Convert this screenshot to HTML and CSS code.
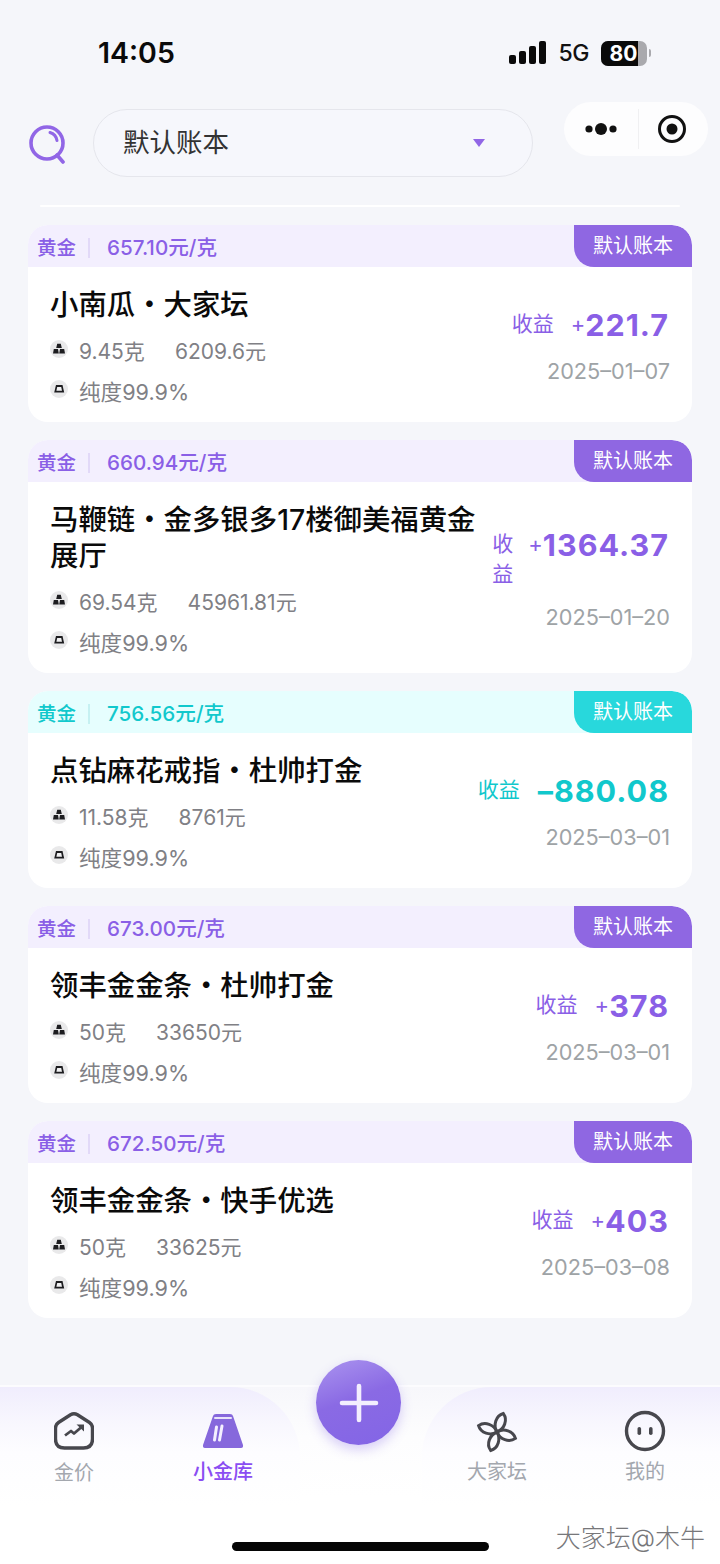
FILE: index.html
```html
<!DOCTYPE html>
<html lang="zh-CN">
<head>
<meta charset="utf-8">
<title>小金库</title>
<link rel="stylesheet" href="styles.css">
</head>
<body>
<div class="page">
  <div class="status">
    <span class="time">14:05</span>
    <div class="status-right">
      <svg class="signal" width="37" height="24" viewBox="0 0 37 24"><rect x="0" y="14" width="7" height="9" rx="2"/><rect x="10" y="10" width="7" height="13" rx="2"/><rect x="20" y="5" width="7" height="18" rx="2"/><rect x="30" y="0" width="7" height="23" rx="2"/></svg>
      <span class="net">5G</span>
      <div class="battery"><div class="batt-body"><span class="batt-fill">80</span></div><i class="batt-cap"></i></div>
    </div>
  </div>

  <div class="nav">
    <svg class="search" width="40" height="40" viewBox="0 0 40 40" fill="none" stroke="#9166e6"><circle cx="19" cy="19" r="16" stroke-width="3.6"/><path d="M22 8.5a10 10 0 0 1 7 8" stroke-width="3" stroke-linecap="round"/><path d="M29 31l6 7" stroke-width="3.6" stroke-linecap="round"/></svg>
    <div class="picker"><span class="picker-text">默认账本</span><i class="caret"></i></div>
    <div class="capsule">
      <svg width="36" height="16" viewBox="0 0 36 16"><circle cx="6" cy="8" r="3.6"/><circle cx="18" cy="8" r="6"/><circle cx="30" cy="8" r="3.6"/></svg>
      <i class="cap-line"></i>
      <svg width="30" height="30" viewBox="0 0 30 30"><circle cx="15" cy="15" r="12.5" fill="none" stroke="#111" stroke-width="3"/><circle cx="15" cy="15" r="5.5"/></svg>
    </div>
  </div>
  <div class="rule"></div>

  <div class="list">
    <section class="card">
      <div class="card-head"><span class="kind">黄金</span><i class="sep"></i><span class="price">657.10元/克</span><span class="tag">默认账本</span></div>
      <div class="card-body">
        <div class="info">
          <h2 class="title">小南瓜・大家坛</h2>
          <div class="meta"><svg class="mi" viewBox="0 0 18 18"><use href="#bars"/></svg><span class="m1">9.45克</span><span class="m2">6209.6元</span></div>
          <div class="meta"><svg class="mi" viewBox="0 0 18 18"><use href="#bar"/></svg><span class="purity">纯度99.9%</span></div>
        </div>
        <div class="side s1">
          <div class="gain"><span class="gain-label">收益</span><span class="plus">+</span><span class="amount">221.7</span></div>
          <div class="date">2025–01–07</div>
        </div>
      </div>
    </section>

    <section class="card">
      <div class="card-head"><span class="kind">黄金</span><i class="sep"></i><span class="price">660.94元/克</span><span class="tag">默认账本</span></div>
      <div class="card-body">
        <div class="info">
          <h2 class="title">马鞭链・金多银多17楼御美福黄金展厅</h2>
          <div class="meta"><svg class="mi" viewBox="0 0 18 18"><use href="#bars"/></svg><span class="m1">69.54克</span><span class="m2">45961.81元</span></div>
          <div class="meta"><svg class="mi" viewBox="0 0 18 18"><use href="#bar"/></svg><span class="purity">纯度99.9%</span></div>
        </div>
        <div class="side s2">
          <div class="gain"><span class="gain-label wrap">收益</span><span class="plus">+</span><span class="amount">1364.37</span></div>
          <div class="date">2025–01–20</div>
        </div>
      </div>
    </section>

    <section class="card teal">
      <div class="card-head"><span class="kind">黄金</span><i class="sep"></i><span class="price">756.56元/克</span><span class="tag">默认账本</span></div>
      <div class="card-body">
        <div class="info">
          <h2 class="title">点钻麻花戒指・杜帅打金</h2>
          <div class="meta"><svg class="mi" viewBox="0 0 18 18"><use href="#bars"/></svg><span class="m1">11.58克</span><span class="m2">8761元</span></div>
          <div class="meta"><svg class="mi" viewBox="0 0 18 18"><use href="#bar"/></svg><span class="purity">纯度99.9%</span></div>
        </div>
        <div class="side s1">
          <div class="gain"><span class="gain-label">收益</span><span class="amount">–880.08</span></div>
          <div class="date">2025–03–01</div>
        </div>
      </div>
    </section>

    <section class="card">
      <div class="card-head"><span class="kind">黄金</span><i class="sep"></i><span class="price">673.00元/克</span><span class="tag">默认账本</span></div>
      <div class="card-body">
        <div class="info">
          <h2 class="title">领丰金金条・杜帅打金</h2>
          <div class="meta"><svg class="mi" viewBox="0 0 18 18"><use href="#bars"/></svg><span class="m1">50克</span><span class="m2">33650元</span></div>
          <div class="meta"><svg class="mi" viewBox="0 0 18 18"><use href="#bar"/></svg><span class="purity">纯度99.9%</span></div>
        </div>
        <div class="side s1">
          <div class="gain"><span class="gain-label">收益</span><span class="plus">+</span><span class="amount">378</span></div>
          <div class="date">2025–03–01</div>
        </div>
      </div>
    </section>

    <section class="card">
      <div class="card-head"><span class="kind">黄金</span><i class="sep"></i><span class="price">672.50元/克</span><span class="tag">默认账本</span></div>
      <div class="card-body">
        <div class="info">
          <h2 class="title">领丰金金条・快手优选</h2>
          <div class="meta"><svg class="mi" viewBox="0 0 18 18"><use href="#bars"/></svg><span class="m1">50克</span><span class="m2">33625元</span></div>
          <div class="meta"><svg class="mi" viewBox="0 0 18 18"><use href="#bar"/></svg><span class="purity">纯度99.9%</span></div>
        </div>
        <div class="side s1">
          <div class="gain"><span class="gain-label">收益</span><span class="plus">+</span><span class="amount">403</span></div>
          <div class="date">2025–03–08</div>
        </div>
      </div>
    </section>
  </div>

  <div class="tabbar">
    <div class="tab-bg left"></div>
    <div class="tab-bg right"></div>
    <div class="tab t1">
      <svg width="40" height="38" viewBox="0 0 40 38" fill="none" stroke="#47474d"><path d="M4.500 10.500L16.500 2.800q3.500-2 7 0l12 7.700q3 2 3 5.500V27q0 9-9 9H10.500q-9 0-9-9V16q0-3.500 3-5.500z" stroke-width="3.400"/><path d="M11 23.500l6-4.500 3 2.500 7-6" stroke-width="2.800" stroke-linejoin="round"/><path d="M22.500 12.500h7.500v7z" fill="#47474d" stroke="none"/></svg>
      <span class="tab-label">金价</span>
    </div>
    <div class="tab t2">
      <svg width="42" height="34" viewBox="0 0 42 34"><path d="M11 2q.5-2 3-2h14q2.500 0 3 2l10 29q.5 3-2 3H3q-2.500 0-2-3z" fill="#8668dc"/><path d="M13 4h16" stroke="#e9e3fb" stroke-width="2" stroke-linecap="round"/><path d="M14.500 13l-2 13M20 12l-2.500 14" stroke="#f4f0ff" stroke-width="3" stroke-linecap="round"/></svg>
      <span class="tab-label active">小金库</span>
    </div>
    <button class="fab" aria-label="添加"><svg width="40" height="40" viewBox="0 0 40 40"><path d="M20 3v34M3 20h34" stroke="#f3eefe" stroke-width="4.600" stroke-linecap="round"/></svg></button>
    <div class="tab t3">
      <svg width="42" height="42" viewBox="0 0 42 42" fill="none" stroke="#47474d" stroke-width="3"><g transform="rotate(19 21 21)"><path d="M21 21C15 16 14.500 6 21 1.500 27.500 6 27 16 21 21z"/><path d="M21 21C15 16 14.500 6 21 1.500 27.500 6 27 16 21 21z" transform="rotate(90 21 21)"/><path d="M21 21C15 16 14.500 6 21 1.500 27.500 6 27 16 21 21z" transform="rotate(180 21 21)"/><path d="M21 21C15 16 14.500 6 21 1.500 27.500 6 27 16 21 21z" transform="rotate(270 21 21)"/></g></svg>
      <span class="tab-label">大家坛</span>
    </div>
    <div class="tab t4">
      <svg width="42" height="42" viewBox="0 0 42 42"><circle cx="21" cy="21" r="18.500" fill="none" stroke="#47474d" stroke-width="3.400"/><rect x="13.500" y="17" width="3.600" height="8" rx="1.800" fill="#47474d"/><rect x="25" y="17" width="3.600" height="8" rx="1.800" fill="#47474d"/></svg>
      <span class="tab-label">我的</span>
    </div>
    <div class="home"></div>
    <span class="watermark">大家坛@木牛</span>
  </div>
</div>
<svg class="defs" width="0" height="0" aria-hidden="true">
  <symbol id="bars" viewBox="0 0 18 18"><circle cx="9" cy="9" r="9" fill="#e9e9ea"/><path d="M7.200 3.800h3.600l1 4.200H6.200zM3.800 9h4.200l.8 4.600H3zM10 9h4.200l.8 4.600H9.200z" fill="#1d1d20"/></symbol>
  <symbol id="bar" viewBox="0 0 18 18"><circle cx="9" cy="9" r="9" fill="#e9e9ea"/><path d="M6 5h6.500l1.700 7.500H4.200z" fill="#1d1d20"/><path d="M7.200 7h4l.8 3.700H6.400z" fill="#f1f1f2"/></symbol>
</svg>
</body>
</html>
```
FILE: styles.css
```css
* { box-sizing: border-box; }
html, body { margin: 0; padding: 0; }
body {
  width: 720px;
  height: 1564px;
  overflow: hidden;
  background: #f5f6fa;
  font-family: Inter, "Noto Sans CJK SC", sans-serif;
}
.page { width: 720px; height: 1564px; display: flex; flex-direction: column; position: relative; }
.defs { position: absolute; }

.status { height: 100px; padding: 35px 69px 0 98px; display: flex; justify-content: space-between; align-items: flex-start; }
.time { font-size: 28.5px; line-height: 36px; font-weight: 600; color: #0a0a0a; }
.status-right { display: flex; align-items: center; gap: 12px; height: 36px; }
.signal { fill: #0a0a0a; margin-top: -1px; }
.net { font-size: 23px; color: #111; font-weight: 500; letter-spacing: -0.5px; margin-left: 1px; }
.battery { display: flex; align-items: center; gap: 2px; }
.batt-body { height: 25px; border-radius: 7px; background: #a9a9ad; width: 46px; overflow: hidden; }
.batt-fill { display: block; width: 37px; height: 25px; background: #0a0a0a; color: #fff; font-size: 21px; line-height: 25px; font-weight: 700; text-align: center; padding-left: 8px; }
.batt-cap { width: 2px; height: 8px; background: #a9a9ad; border-radius: 0 2px 2px 0; }

.nav { height: 105px; display: flex; align-items: flex-start; position: relative; padding-left: 28px; }
.search { margin-top: 24px; }
.picker { margin-left: 25px; margin-top: 9px; width: 440px; height: 68px; border-radius: 34px; border: 1px solid #e5e6ec; background: #f6f7fc; display: flex; align-items: center; justify-content: space-between; padding: 0 47px 0 29px; }
.picker-text { font-size: 26.5px; line-height: 36px; color: #333; margin-top: -2px; }
.caret { width: 0; height: 0; border-left: 6.500px solid transparent; border-right: 6.500px solid transparent; border-top: 8.500px solid #9166e6; }
.capsule { position: absolute; right: 12px; top: 2px; width: 144px; height: 54px; border-radius: 27px; background: #fdfdfe; display: flex; align-items: center; justify-content: space-between; padding: 0 21px 0 19px; }
.capsule svg { fill: #111; }
.cap-line { width: 1px; height: 40px; background: #f0f0f2; margin-left: 1px; }

.rule { height: 2px; margin: 0 40px 18px; background: #fff; border-radius: 1px; flex: none; }

.list { display: flex; flex-direction: column; gap: 18.5px; padding: 0 28px; }
.card { --c: #8f67e2; --ink: #8a5fe6; background: #fff; border-radius: 20px; overflow: hidden; }
.card.teal { --c: #28d8dc; --ink: #11c8cc; }
.card-head { height: 42px; background: #f3effe; display: flex; align-items: center; padding-left: 9px; position: relative; }
.teal .card-head { background: #e6fefe; }
.kind, .price { line-height: 42px; color: var(--ink); font-weight: 500; margin-top: 3px; }
.kind { font-size: 19.5px; }
.price { font-size: 20.6px; }
.sep { width: 2px; height: 20px; background: #e2d9f8; margin: 3px 17px 0 12px; }
.teal .sep { background: #c6f1f2; }
.tag { position: absolute; right: 0; top: 0; height: 42px; width: 118px; background: var(--c); border-radius: 0 20px 0 20px; color: #fff; font-size: 20px; line-height: 42px; text-align: center; }

.card-body { display: flex; justify-content: space-between; padding: 20px 22px 0; height: 154.5px; }
.card:nth-child(2) .card-body { height: 190.5px; }
.info { flex: 1; min-width: 0; max-width: 430px; }
.title { margin: 0; font-size: 28.4px; line-height: 36px; font-weight: 500; color: #0a0a0a; }
.meta { display: flex; align-items: center; height: 40px; font-size: 21px; color: #808085; }
.title + .meta { margin-top: 7px; }
.mi { width: 18px; height: 18px; margin-right: 11px; flex: none; margin-top: -3px; }
.m2 { margin-left: 30px; }
.purity { font-size: 21.6px; }
.side { display: flex; flex-direction: column; align-items: flex-end; flex: none; }
.s1 { padding-top: 15px; }
.gain { display: flex; align-items: center; height: 44px; color: var(--ink); margin-right: 1px; }
.gain-label { font-size: 21px; margin-right: 17px; color: var(--ink); margin-top: -4px; }
.gain-label.wrap { width: 22px; line-height: 30px; margin-top: 30px; margin-right: 14px; }
.teal .gain-label { margin-right: 18px; }
.s2 .gain { height: 64px; margin-top: 10px; }
.plus { font-size: 22px; font-weight: 400; }
.amount { font-size: 30.5px; font-weight: 700; letter-spacing: 1px; }
.date { font-size: 21.7px; line-height: 30px; color: #9ea3a6; margin-top: 10px; }
.s2 .date { margin-top: 26px; }

.tabbar {
  position: absolute; left: 0; right: 0; bottom: 0; height: 179px;
  border-top: 2px solid #fcfcfe;
  background: linear-gradient(#f7f7fb, #fdfdfe 50px, #fff 110px);
}
.tab-bg { position: absolute; top: 0; height: 120px; background: linear-gradient(#f0edfd, #f8f7fe 30%, #fdfdff 55%, #fff); width: 300px; }
.tab-bg.left { left: 0; border-radius: 0 70px 0 0; }
.tab-bg.right { right: 0; width: 298px; border-radius: 70px 0 0 0; }
.tab { position: absolute; display: flex; flex-direction: column; align-items: center; width: 100px; top: 25px; }
.t1 { left: 24px; }
.t2 { left: 173px; top: 27px; }
.t3 { left: 447px; top: 24px; }
.t4 { left: 595px; top: 23px; }
.tab-label { font-size: 20px; line-height: 28px; color: #a3a7ae; margin-top: 9px; }
.t2 .tab-label { margin-top: 10px; }
.t3 .tab-label { margin-top: 5px; }
.t4 .tab-label { margin-top: 6px; }
.tab-label.active { color: #8a4df2; font-weight: 500; }
.fab {
  position: absolute; left: 316px; top: -27px; width: 85px; height: 85px; border-radius: 50%; border: 0; padding: 0;
  background: linear-gradient(160deg, #ab94ef, #8a6ae4 45%, #8365e6);
  box-shadow: 0 5px 12px rgba(130, 100, 230, .3);
  display: flex; align-items: center; justify-content: center;
}
.home { position: absolute; left: 232px; bottom: 13px; width: 257px; height: 9px; background: #050505; border-radius: 5px; }
.watermark { position: absolute; right: 15px; bottom: 11px; font-size: 25px; line-height: 30px; color: #77777a; font-weight: 300; text-shadow: 1px 1px 0 #fff; }
```
